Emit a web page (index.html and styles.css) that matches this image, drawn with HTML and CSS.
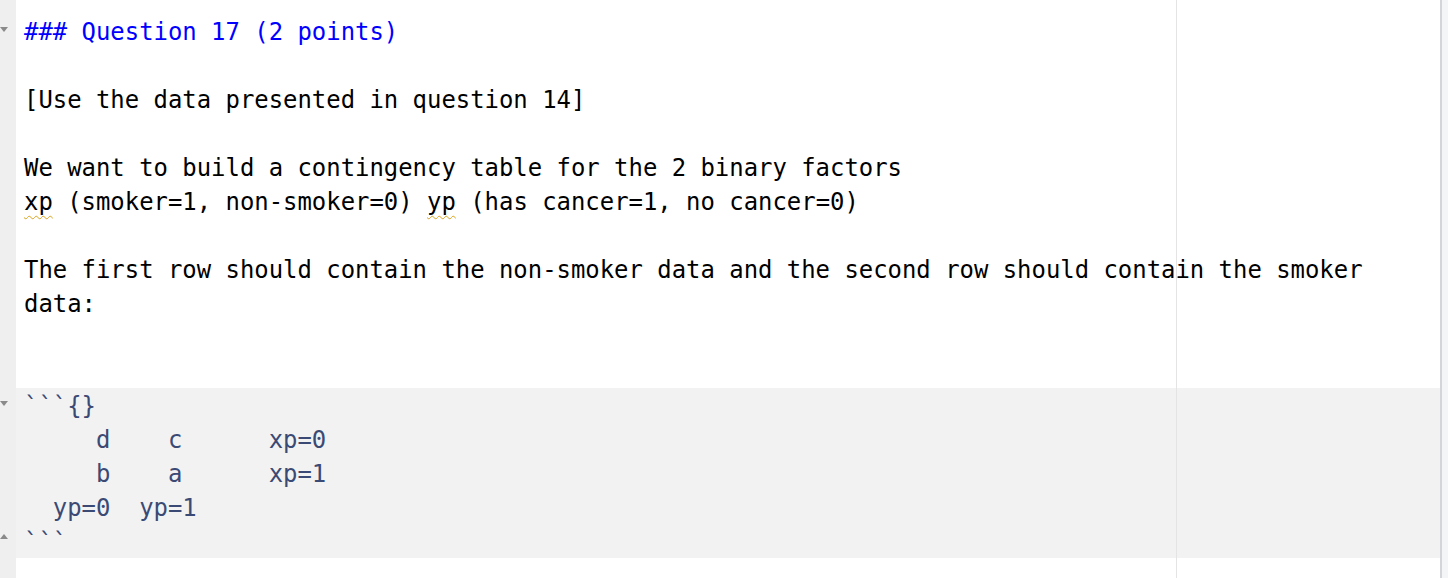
FILE: index.html
```html
<!DOCTYPE html>
<html>
<head>
<meta charset="utf-8">
<link rel="stylesheet" href="styles.css">
</head>
<body>
<div class="editor">
  <div class="gutter">
    <div class="gl"><span class="fold down"></span></div>
    <div class="gl"></div><div class="gl"></div><div class="gl"></div><div class="gl"></div>
    <div class="gl"></div><div class="gl"></div><div class="gl"></div><div class="gl"></div>
    <div class="gl"></div><div class="gl"></div>
    <div class="gl"><span class="fold down"></span></div>
    <div class="gl"></div><div class="gl"></div><div class="gl"></div>
    <div class="gl"><span class="fold up"></span></div>
    <div class="gl"></div>
  </div>
  <div class="content">
    <div class="margin-line"></div>
    <div class="line hdr">### Question 17 (2 points)</div>
    <div class="line"> </div>
    <div class="line">[Use the data presented in question 14]</div>
    <div class="line"> </div>
    <div class="line">We want to build a contingency table for the 2 binary factors</div>
    <div class="line"><span class="sp">xp</span> (smoker=1, non-smoker=0) <span class="sp">yp</span> (has cancer=1, no cancer=0)</div>
    <div class="line"> </div>
    <div class="line">The first row should contain the non-smoker data and the second row should contain the smoker</div>
    <div class="line">data:</div>
    <div class="line"> </div>
    <div class="line"> </div>
    <div class="chunk">
      <div class="line">```{}</div>
      <div class="line">     d    c      xp=0</div>
      <div class="line">     b    a      xp=1</div>
      <div class="line">  yp=0  yp=1</div>
      <div class="line">```</div>
    </div>
    <div class="line"> </div>
  </div>
  <div class="vborder"></div>
  <div class="scroll"></div>
</div>
</body>
</html>
```
FILE: styles.css
```css
html, body {
  margin: 0;
  padding: 0;
  background: #ffffff;
  height: 100%;
  overflow: hidden;
}
.editor {
  display: flex;
  height: 578px;
}
.gutter {
  width: 16px;
  flex: none;
  background: #efefef;
  padding-top: 14px;
  box-sizing: border-box;
}
.gl {
  height: 34px;
  display: flex;
  align-items: center;
  padding-left: 0;
}
.fold {
  width: 0;
  height: 0;
  border-left: 4.5px solid transparent;
  border-right: 4.5px solid transparent;
}
.fold.down {
  border-top: 5px solid #8a8a8a;
  margin-top: -3px;
}
.fold.up {
  border-bottom: 5px solid #8a8a8a;
  margin-top: -10px;
}
.content {
  flex: 1;
  position: relative;
  padding-top: 14px;
  font-family: "DejaVu Sans Mono", "Liberation Mono", monospace;
  font-size: 23.92px;
  color: #000000;
}
.margin-line {
  position: absolute;
  left: 1160px;
  top: 0;
  bottom: 0;
  width: 1px;
  background: #e4e4e4;
}
.line {
  height: 33px;
  padding-top: 1px;
  line-height: 34px;
  white-space: pre;
  padding-left: 8px;
}
.hdr {
  color: #0000ff;
}
.sp {
  text-decoration: underline wavy #d9a21b;
  text-decoration-thickness: 1px;
  text-underline-offset: 5px;
}
.chunk {
  background: #f2f2f2;
  color: #3b4a74;
}
.vborder {
  width: 2px;
  flex: none;
  background: #d3d5d9;
}
.scroll {
  width: 6px;
  flex: none;
  background: #f4f5f7;
}
```
